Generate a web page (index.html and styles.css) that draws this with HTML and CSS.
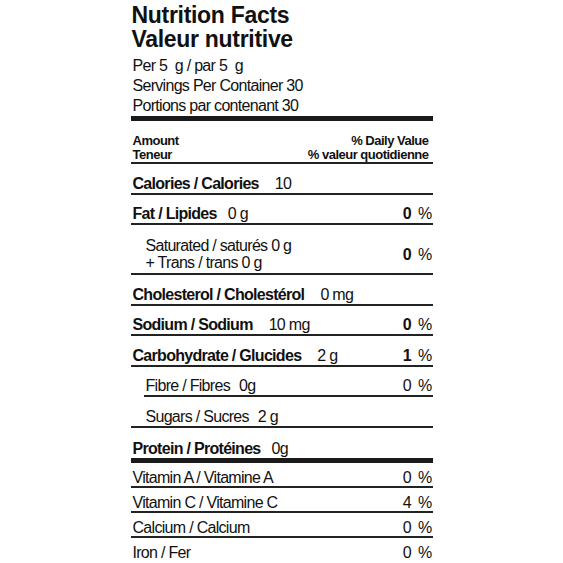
FILE: index.html
```html
<!DOCTYPE html>
<html lang="en">
<head>
  <meta charset="UTF-8">
  <meta name="viewport" content="width=device-width, initial-scale=1.0">
  <title>Nutrition Facts</title>
  <link rel="stylesheet" href="styles.css">
</head>
<body>
  <div class="label">
    <h1 class="label__title">Nutrition Facts<br>Valeur nutritive</h1>
    <div class="label__serving">
      <div>Per 5&nbsp; g / par 5&nbsp; g</div>
      <div>Servings Per Container 30</div>
      <div>Portions par contenant 30</div>
    </div>

    <div class="label__head">
      <div>Amount<br>Teneur</div>
      <div class="label__head-dv">% Daily Value<br>% valeur quotidienne</div>
    </div>

    <div class="row">
      <span class="name">Calories / Calories</span><span class="amt">10</span>
    </div>
    <div class="row">
      <span class="name">Fat / Lipides</span><span class="amt amt--near">0 g</span>
      <span class="dv"><b>0</b><span class="pct">%</span></span>
    </div>
    <div class="row row--double">
      <span class="sub-text">Saturated / saturés 0 g<br>+ Trans / trans 0 g</span>
      <span class="dv"><b>0</b><span class="pct">%</span></span>
    </div>
    <div class="row">
      <span class="name">Cholesterol / Cholestérol</span><span class="amt">0 mg</span>
    </div>
    <div class="row">
      <span class="name">Sodium / Sodium</span><span class="amt">10 mg</span>
      <span class="dv"><b>0</b><span class="pct">%</span></span>
    </div>
    <div class="row">
      <span class="name">Carbohydrate / Glucides</span><span class="amt">2 g</span>
      <span class="dv"><b>1</b><span class="pct">%</span></span>
    </div>
    <div class="row row--sub row--indent-rule">
      <span>Fibre / Fibres</span><span class="amt amt--sub">0g</span>
      <span class="dv">0<span class="pct">%</span></span>
    </div>
    <div class="row row--sub">
      <span>Sugars / Sucres</span><span class="amt amt--sub">2 g</span>
    </div>
    <div class="row row--protein">
      <span class="name">Protein / Protéines</span><span class="amt amt--near">0g</span>
    </div>

    <div class="vit">
      <span>Vitamin A / Vitamine A</span><span class="dv">0<span class="pct">%</span></span>
    </div>
    <div class="vit">
      <span>Vitamin C / Vitamine C</span><span class="dv">4<span class="pct">%</span></span>
    </div>
    <div class="vit">
      <span>Calcium / Calcium</span><span class="dv">0<span class="pct">%</span></span>
    </div>
    <div class="vit vit--last">
      <span>Iron / Fer</span><span class="dv">0<span class="pct">%</span></span>
    </div>
  </div>
</body>
</html>
```

FILE: styles.css
```css
* {
  box-sizing: border-box;
}

body, html {
  margin: 0;
  padding: 0;
  background: #fff;
}

body {
  font-family: "Liberation Sans", Arial, sans-serif;
  color: #111;
}

.label {
  width: 302px;
  margin: 0 auto;
  padding-top: 3px;
  font-size: 16px;
  letter-spacing: -0.7px;
}

.label__title {
  margin: 0;
  font-size: 23px;
  line-height: 24px;
  font-weight: bold;
  letter-spacing: -0.3px;
  padding-left: 1px;
}

.label__serving {
  margin-top: 5px;
  line-height: 20px;
  padding-left: 2px;
  border-bottom: 5px solid #1a1a1a;
}

.label__head {
  display: flex;
  justify-content: space-between;
  padding: 13px 4px 0 2px;
  font-size: 13px;
  line-height: 14px;
  font-weight: bold;
  letter-spacing: -0.5px;
  border-bottom: 2px solid #222;
}

.label__head-dv {
  text-align: right;
}

.row {
  display: flex;
  align-items: baseline;
  padding: 10.5px 1px 0 2px;
  line-height: 18px;
  border-bottom: 2px solid #222;
}

.name {
  font-weight: bold;
}

.amt {
  margin-left: 16px;
}

.amt--near {
  margin-left: 11px;
}

.amt--sub {
  margin-left: 9px;
}

.dv {
  margin-left: auto;
}

.dv b {
  font-weight: bold;
}

.pct {
  margin-left: 7px;
}

.row--double {
  align-items: center;
  padding-top: 12px;
  padding-bottom: 2px;
  line-height: 17px;
}

.sub-text {
  padding-left: 13px;
}

.row--sub {
  padding-left: 15px;
}

.row--indent-rule {
  border-bottom: none;
  background: linear-gradient(#222, #222) no-repeat 13px 100% / calc(100% - 13px) 2px;
  padding-bottom: 2px;
}

.row--protein {
  padding-top: 12px;
  border-bottom: 5px solid #1a1a1a;
}

.vit {
  display: flex;
  justify-content: space-between;
  padding: 7px 1px 0 2px;
  line-height: 16px;
  border-bottom: 2px solid #222;
}

.vit--last {
  border-bottom: none;
}
```
